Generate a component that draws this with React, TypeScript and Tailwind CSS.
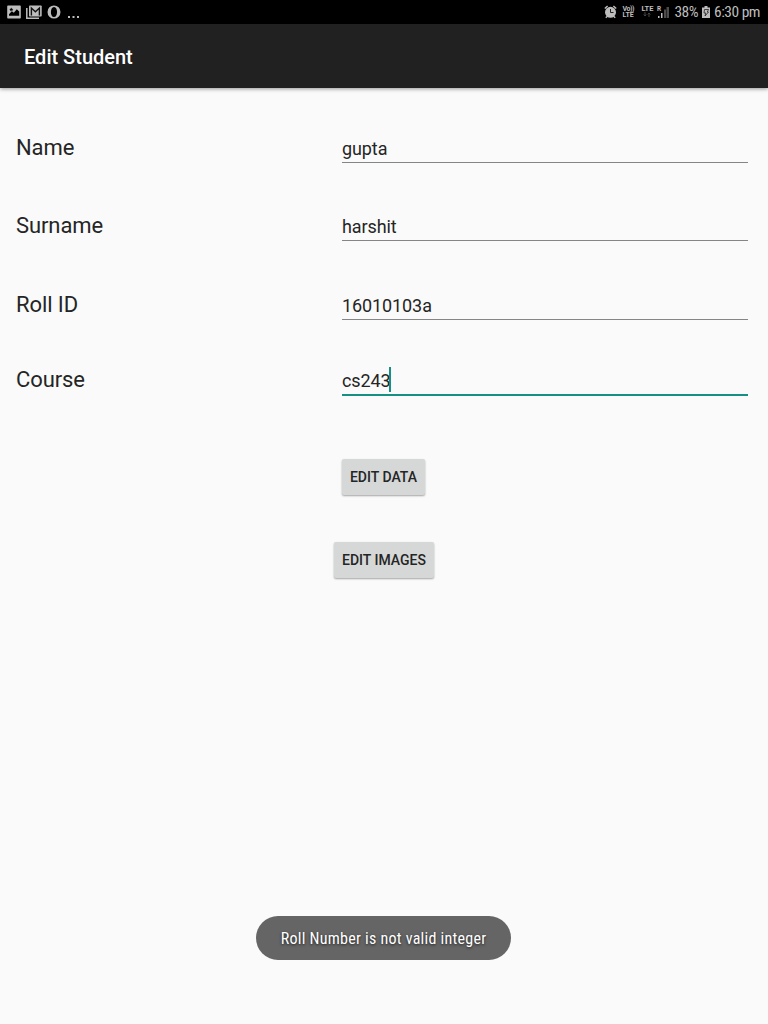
import React from 'react';

function StatusBar() {
  return (
    <div className="flex h-6 items-center justify-between bg-black pl-[7px] pr-2 text-[#bdbdbd]">
      <div className="flex h-6 items-center">
        <svg width="14" height="24" viewBox="0 0 14 24">
          <path fillRule="evenodd" fill="currentColor" d="M1 5.5h12q.8 0 .8.8v11.4q0 .8-.8.8H1q-.8 0-.8-.8V6.300q0-.8.8-.8zM2 15.800h10.200V11.500L9.800 9.300 6.800 12.800 4.800 11.300 2 14.200zM4.200 7.500l-.5 1.300-1.400.2 1.100.9-.3 1.400 1.300-.7 1.200.7-.3-1.400 1-.9-1.400-.2z" />
        </svg>
        <svg className="ml-[5px]" width="16" height="24" viewBox="0 0 16 24">
          <path d="M.8 8v10.200H13" fill="none" stroke="currentColor" strokeWidth="1.500" />
          <rect x="3" y="5.500" width="12.700" height="11" rx=".8" fill="currentColor" />
          <path d="M5.400 15.500V8l4 3.700 4-3.700v7.500" fill="none" stroke="#111" strokeWidth="1.400" />
        </svg>
        <svg className="ml-[5px]" width="14" height="24" viewBox="0 0 14 24">
          <path fillRule="evenodd" fill="currentColor" d="M7 5.400a6.500 6.600 0 1 1 0 13.200A6.500 6.600 0 0 1 7 5.400zm0 1.500c-4.100 0-4.100 10.200 0 10.200s4.100-10.200 0-10.200z" />
        </svg>
        <svg className="ml-[6px]" width="14" height="24" viewBox="0 0 14 24">
          <path d="M1 16h2v2H1zM5.500 16h2v2h-2zM10 16h2v2h-2z" fill="currentColor" />
        </svg>
      </div>
      <div className="flex h-6 items-center">
        <svg width="13" height="24" viewBox="0 0 13 24">
          <circle cx="6.500" cy="12.300" r="5.500" fill="currentColor" />
          <path d="M.8 8.500 3.600 6M12.200 8.500 9.400 6M3 16.500l-1.200 1.200M10 16.500l1.200 1.200" stroke="currentColor" strokeWidth="1.500" />
          <path d="M6.500 9v3.500h3" fill="none" stroke="#222" strokeWidth="1" />
        </svg>
        <div className="ml-[5px] w-[13px] font-['Roboto',sans-serif] text-[7px] leading-[6px] font-bold">
          <div className="tracking-[-0.4px]">Vo))</div>
          <div>LTE</div>
        </div>
        <div className="ml-[5px] flex h-[14px] w-[14px] flex-col items-center">
          <span className="font-['Roboto',sans-serif] text-[7.500px] leading-[7px] font-bold">LTE</span>
          <svg width="8" height="5" viewBox="0 0 8 5"><path d="M2 0v4M.7 2.500 2 4l1.300-1.500M6 5V1M4.700 2.500 6 1l1.300 1.500" fill="none" stroke="#444" /></svg>
        </div>
        <svg className="ml-[3px]" width="13" height="24" viewBox="0 0 13 24">
          <text x="0" y="11" fontFamily="Roboto, sans-serif" fontWeight="700" fontSize="6.500" fill="currentColor">R</text>
          <path d="M1 16h1.500v2H1zM4 13h1.500v5H4z" fill="currentColor" />
          <path d="M7 9.500h2V18H7zM9.500 7H12v11H9.500z" fill="#4c4c4c" />
        </svg>
        <span className="ml-[4px] font-['Roboto_Condensed','Roboto',sans-serif] text-[15.5px] leading-6 tracking-[-0.5px] [font-stretch:75%]">38%</span>
        <svg className="ml-[4px]" width="8" height="24" viewBox="0 0 8 24">
          <path d="M2.500 6h3v1.500H8V18H0V7.500h2.500z" fill="currentColor" />
          <path d="M2.500 9.500h4L5.300 12h1.200L3 16l.8-3H2z" fill="none" stroke="#222" strokeWidth=".8" />
        </svg>
        <span className="ml-[4px] whitespace-nowrap font-['Roboto_Condensed','Roboto',sans-serif] text-[15.5px] leading-6 tracking-[-0.5px] [font-stretch:75%]">6:30 pm</span>
      </div>
    </div>
  );
}

function Row({ label, value, focused = false }: { label: string; value: string; focused?: boolean }) {
  return (
    <div className="flex h-[45px] pl-4 pr-5">
      <div className="w-[326px] pt-[15px] text-[22px] leading-[30px] tracking-[-0.1px]">{label}</div>
      <div className={focused ? 'flex h-[46px] flex-1 border-b-2 border-[#159082] pt-[17px]' : 'flex flex-1 border-b border-[#858585] pt-[17px]'}>
        <span className="text-[18px] leading-[28px] tracking-[-0.1px]">{value}</span>
        {focused && <span className="-ml-[1.5px] h-[25px] w-[2px] bg-[#159082]" />}
      </div>
    </div>
  );
}

export default function App() {
  return (
    <div className="flex h-[1024px] w-[768px] flex-col overflow-hidden bg-[#fafafa] font-['Roboto',sans-serif] text-[#252525]">
      <StatusBar />
      <header className="flex h-16 items-center bg-[#212121] px-6 pt-[2px] text-[20px] font-medium text-white shadow-[0_1px_4px_rgba(0,0,0,0.4)]">Edit Student</header>
      <main className="flex flex-1 flex-col pt-[30px]">
        <Row label="Name" value="gupta" />
        <div className="h-[33px]" />
        <Row label="Surname" value="harshit" />
        <div className="h-[34px]" />
        <Row label="Roll ID" value="16010103a" />
        <div className="h-[30px]" />
        <Row label="Course" value="cs243" focused />
        <div className="mt-[64px] flex flex-col items-center gap-[47px]">
          <button className="mr-px h-9 w-[83px] rounded-[2px] bg-[#d6d8d7] text-[14px] font-medium whitespace-nowrap shadow-[0_1px_2px_rgba(0,0,0,0.35)]">EDIT DATA</button>
          <button className="h-9 w-[100px] rounded-[2px] bg-[#d6d8d7] text-[14px] font-medium whitespace-nowrap shadow-[0_1px_2px_rgba(0,0,0,0.35)]">EDIT IMAGES</button>
        </div>
        <div className="mt-auto mb-16 ml-[256px] flex h-11 w-[255px] items-center justify-center rounded-full bg-[#656565] pt-[2px] font-['Roboto_Condensed','Roboto',sans-serif] text-[16px] tracking-[0.26px] whitespace-nowrap text-white [font-stretch:75%] [text-shadow:0_1px_3px_rgba(0,0,0,0.7)]">Roll Number is not valid integer</div>
      </main>
    </div>
  );
}
